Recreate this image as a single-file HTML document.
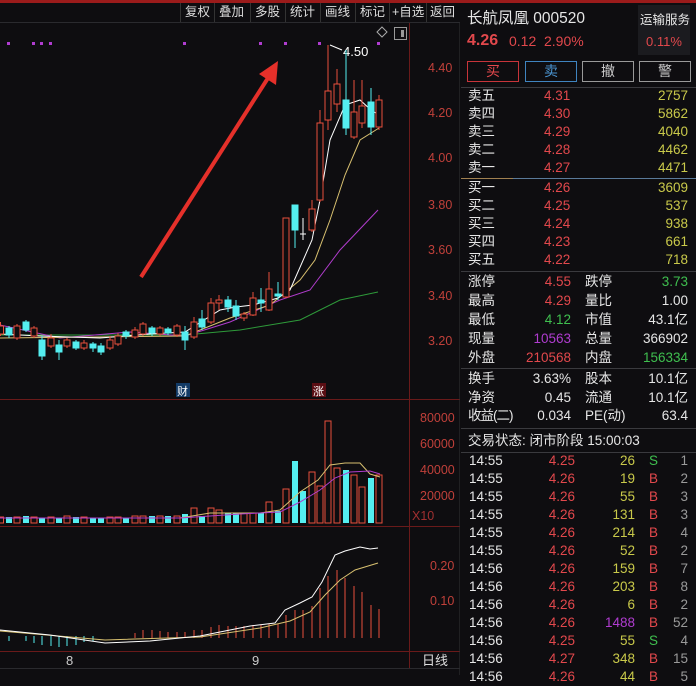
<!DOCTYPE html><html><head><meta charset="utf-8"><style>
*{margin:0;padding:0;box-sizing:border-box}
body{width:696px;height:675px;background:#0e0d10;overflow:hidden;position:relative;font-family:"Liberation Sans","Noto Sans CJK SC",sans-serif;color:#e6e6e6}
.a{position:absolute;white-space:nowrap}
.r{color:#e2484c}.y{color:#c9c94a}.g{color:#3fbf4f}.w{color:#e6e6e6}.p{color:#b03cd0}.gr{color:#9a9a9a}
.tb{position:absolute;top:3px;height:19px;font-size:12.5px;color:#ddd;border-left:1px solid #333;padding-left:4px;line-height:19px}
.row{position:absolute;left:461px;width:235px;height:18px;font-size:13.5px;line-height:18px}
.row span{position:absolute}
.hl{position:absolute;left:461px;width:235px;height:1px;background:#3a3a3e}
</style></head><body>
<div class="a" style="left:0;top:0;width:696px;height:3px;background:#9b1b1b"></div>
<div class="tb" style="left:180px">复权</div><div class="tb" style="left:214px">叠加</div><div class="tb" style="left:250px">多股</div><div class="tb" style="left:285px">统计</div><div class="tb" style="left:320px">画线</div><div class="tb" style="left:355px">标记</div><div class="tb" style="left:389px;padding-left:2px">+自选</div><div class="tb" style="left:426px;padding-left:3px">返回</div>
<div class="a" style="left:0;top:22px;width:460px;height:1px;background:#2a2a2e"></div>
<svg class="a" style="left:0;top:0" width="460" height="675">
<g stroke="#6a1a1a" stroke-width="1"><line x1="409.5" y1="23" x2="409.5" y2="668"/><line x1="0" y1="399.5" x2="460" y2="399.5"/><line x1="0" y1="526.5" x2="460" y2="526.5"/><line x1="0" y1="651.5" x2="460" y2="651.5"/><line x1="460" y1="23" x2="460" y2="675" stroke="#333"/></g>
<g fill="#c0403a" font-size="12.5" font-family="Liberation Sans">
<text x="428" y="72">4.40</text><text x="428" y="117">4.20</text><text x="428" y="162">4.00</text><text x="428" y="209">3.80</text><text x="428" y="254">3.60</text><text x="428" y="300">3.40</text><text x="428" y="345">3.20</text>
<text x="420" y="422">80000</text><text x="420" y="448">60000</text><text x="420" y="474">40000</text><text x="420" y="500">20000</text><text x="412" y="520" fill="#a03030">X10</text>
<text x="430" y="570">0.20</text><text x="430" y="605">0.10</text></g>
<g fill="#b03cd0"><rect x="7" y="42" width="3" height="3"/><rect x="32" y="42" width="3" height="3"/><rect x="40" y="42" width="3" height="3"/><rect x="49" y="42" width="3" height="3"/><rect x="183" y="42" width="3" height="3"/><rect x="259" y="42" width="3" height="3"/><rect x="284" y="42" width="3" height="3"/><rect x="318" y="42" width="3" height="3"/><rect x="377" y="42" width="3" height="3"/></g>
<path d="M382 27l5 5-5 5-5-5z" fill="none" stroke="#aaa"/><rect x="394.5" y="27.5" width="12" height="12" fill="none" stroke="#999"/><rect x="401" y="30" width="3" height="7" fill="#999"/>
<path d="M330 45l12 5" stroke="#fff"/><text x="343" y="56" fill="#fff" font-size="13">4.50</text>
<line x1="141" y1="277" x2="268" y2="78" stroke="#e5302a" stroke-width="4"/><path d="M278 61l-2 24-17-11z" fill="#e5302a"/>
<polyline fill="none" stroke="#2e9a3a" points="0,335 185,335 240,330 300,320 340,300 378,292"/>
<polyline fill="none" stroke="#b03ccc" points="0,325 60,338 130,332 185,336 230,322 280,300 310,290 340,250 378,210"/>
<polyline fill="none" stroke="#d8c070" points="0,338 185,336 230,318 270,305 300,280 315,260 330,220 345,175 360,140 379,128"/>
<polyline fill="none" stroke="#fff" points="0,334 40,336 100,338 150,334 185,332 220,310 236,307 253,305 278,298 290,290 312,240 320,200 330,140 345,105 360,100 371,110 379,115"/>
<g stroke-width="1">
<g stroke="#e8503c" fill="#0e0d10">
<line x1="0.5" y1="322" x2="0.5" y2="336"/><rect x="-2.5" y="326" width="6" height="8"/>
<line x1="17" y1="324" x2="17" y2="340"/><rect x="14" y="326" width="6" height="12"/>
<line x1="34" y1="326" x2="34" y2="338"/><rect x="31" y="328" width="6" height="8"/>
<line x1="51" y1="334" x2="51" y2="348"/><rect x="48" y="338" width="6" height="8"/>
<line x1="67" y1="338" x2="67" y2="348"/><rect x="64" y="340" width="6" height="6"/>
<line x1="84" y1="340" x2="84" y2="350"/><rect x="81" y="343" width="6" height="5"/>
<line x1="110" y1="336" x2="110" y2="350"/><rect x="107" y="340" width="6" height="8"/>
<line x1="118" y1="333" x2="118" y2="346"/><rect x="115" y="336" width="6" height="8"/>
<line x1="135" y1="327" x2="135" y2="339"/><rect x="132" y="330" width="6" height="7"/>
<line x1="143" y1="322" x2="143" y2="336"/><rect x="140" y="324" width="6" height="10"/>
<line x1="160" y1="326" x2="160" y2="336"/><rect x="157" y="328" width="6" height="6"/>
<line x1="177" y1="324" x2="177" y2="337"/><rect x="174" y="326" width="6" height="9"/>
<line x1="194" y1="317" x2="194" y2="339"/><rect x="191" y="322" width="6" height="15"/>
<line x1="211" y1="298" x2="211" y2="324"/><rect x="208" y="303" width="6" height="19"/>
<line x1="219" y1="295" x2="219" y2="310"/><rect x="216" y="300" width="6" height="3"/>
<line x1="244" y1="312" x2="244" y2="321"/><rect x="241" y="314" width="6" height="4"/>
<line x1="253" y1="292" x2="253" y2="316"/><rect x="250" y="298" width="6" height="17"/>
<line x1="269" y1="272" x2="269" y2="311"/><rect x="266" y="289" width="6" height="21"/>
<line x1="286" y1="218" x2="286" y2="298"/><rect x="283" y="218" width="6" height="79"/>
<line x1="312" y1="200" x2="312" y2="232"/><rect x="309" y="209" width="6" height="21"/>
<line x1="320" y1="110" x2="320" y2="202"/><rect x="317" y="123" width="6" height="77"/>
<line x1="328" y1="45" x2="328" y2="130"/><rect x="325" y="91" width="6" height="29"/>
<line x1="337" y1="69" x2="337" y2="112"/><rect x="334" y="84" width="6" height="20"/>
<line x1="354" y1="80" x2="354" y2="139"/><rect x="351" y="112" width="6" height="25"/>
<line x1="362" y1="80" x2="362" y2="128"/><rect x="359" y="106" width="6" height="17"/>
<line x1="379" y1="95" x2="379" y2="130"/><rect x="376" y="100" width="6" height="27"/>
</g>
<g stroke="#54eef0" fill="#54eef0">
<line x1="9" y1="326" x2="9" y2="338"/><rect x="6" y="328" width="6" height="7"/>
<line x1="26" y1="320" x2="26" y2="332"/><rect x="23" y="322" width="6" height="8"/>
<line x1="42" y1="336" x2="42" y2="360"/><rect x="39" y="340" width="6" height="16"/>
<line x1="59" y1="340" x2="59" y2="360"/><rect x="56" y="345" width="6" height="7"/>
<line x1="76" y1="340" x2="76" y2="350"/><rect x="73" y="342" width="6" height="6"/>
<line x1="93" y1="342" x2="93" y2="352"/><rect x="90" y="344" width="6" height="4"/>
<line x1="101" y1="343" x2="101" y2="355"/><rect x="98" y="346" width="6" height="6"/>
<line x1="126" y1="330" x2="126" y2="339"/><rect x="123" y="332" width="6" height="4"/>
<line x1="152" y1="326" x2="152" y2="336"/><rect x="149" y="328" width="6" height="5"/>
<line x1="168" y1="327" x2="168" y2="335"/><rect x="165" y="329" width="6" height="4"/>
<line x1="185" y1="326" x2="185" y2="350"/><rect x="182" y="332" width="6" height="8"/>
<line x1="202" y1="310" x2="202" y2="330"/><rect x="199" y="319" width="6" height="8"/>
<line x1="228" y1="296" x2="228" y2="312"/><rect x="225" y="300" width="6" height="7"/>
<line x1="236" y1="300" x2="236" y2="320"/><rect x="233" y="306" width="6" height="10"/>
<line x1="261" y1="288" x2="261" y2="312"/><rect x="258" y="300" width="6" height="3"/>
<line x1="278" y1="282" x2="278" y2="300"/><rect x="275" y="294" width="6" height="2"/>
<line x1="295" y1="205" x2="295" y2="248"/><rect x="292" y="205" width="6" height="25"/>
<line x1="346" y1="50" x2="346" y2="135"/><rect x="343" y="100" width="6" height="28"/>
<line x1="371" y1="88" x2="371" y2="135"/><rect x="368" y="102" width="6" height="25"/>
</g>
<g stroke="#fff"><line x1="303" y1="218" x2="303" y2="240"/><line x1="300" y1="234" x2="306" y2="234"/></g>
</g>
<g font-size="11" font-family="Noto Sans CJK SC"><rect x="176" y="383" width="14" height="14" fill="#123a66"/><text x="177" y="395" fill="#fff">财</text><rect x="312" y="383" width="14" height="14" fill="#5a0e14"/><text x="313" y="395" fill="#fff">涨</text></g>
<g stroke="#e8503c" fill="#0e0d10">
<rect x="-2.5" y="517" width="6" height="6"/><rect x="14" y="517" width="6" height="6"/><rect x="31" y="517" width="6" height="6"/><rect x="48" y="517" width="6" height="6"/><rect x="64" y="516" width="6" height="7"/><rect x="81" y="517" width="6" height="6"/><rect x="107" y="517" width="6" height="6"/><rect x="115" y="517" width="6" height="6"/><rect x="132" y="516" width="6" height="7"/><rect x="140" y="516" width="6" height="7"/><rect x="157" y="516" width="6" height="7"/><rect x="174" y="516" width="6" height="7"/><rect x="191" y="508" width="6" height="15"/><rect x="208" y="508" width="6" height="15"/><rect x="216" y="510" width="6" height="13"/><rect x="241" y="513" width="6" height="10"/><rect x="250" y="513" width="6" height="10"/><rect x="266" y="502" width="6" height="21"/><rect x="283" y="489" width="6" height="34"/><rect x="309" y="472" width="6" height="51"/><rect x="317" y="486" width="6" height="37"/><rect x="325" y="421" width="6" height="102"/><rect x="334" y="468" width="6" height="55"/><rect x="351" y="475" width="6" height="48"/><rect x="359" y="487" width="6" height="36"/><rect x="376" y="475" width="6" height="48"/>
</g>
<g fill="#54eef0"><rect x="6" y="517" width="6" height="6"/><rect x="23" y="516" width="6" height="7"/><rect x="39" y="518" width="6" height="5"/><rect x="56" y="518" width="6" height="5"/><rect x="73" y="517" width="6" height="6"/><rect x="90" y="518" width="6" height="5"/><rect x="98" y="518" width="6" height="5"/><rect x="123" y="518" width="6" height="5"/><rect x="149" y="516" width="6" height="7"/><rect x="165" y="516" width="6" height="7"/><rect x="182" y="514" width="6" height="9"/><rect x="199" y="516" width="6" height="7"/><rect x="225" y="513" width="6" height="10"/><rect x="233" y="513" width="6" height="10"/><rect x="258" y="513" width="6" height="10"/><rect x="275" y="511" width="6" height="12"/><rect x="292" y="461" width="6" height="62"/><rect x="300" y="491" width="6" height="32"/><rect x="343" y="470" width="6" height="53"/><rect x="368" y="478" width="6" height="45"/></g>
<polyline fill="none" stroke="#d8c070" points="0,518 180,518 210,513 260,513 280,510 300,492 318,480 330,465 345,463 360,463 370,474 380,477"/>
<polyline fill="none" stroke="#b03ccc" points="0,518 180,518 240,514 280,512 300,502 320,490 335,478 350,472 370,471 380,474"/>
<g stroke="#54eef0"><line x1="9" y1="636" x2="9" y2="641"/><line x1="26" y1="636" x2="26" y2="641"/><line x1="34" y1="636" x2="34" y2="643"/><line x1="42" y1="636" x2="42" y2="645"/><line x1="51" y1="636" x2="51" y2="646"/><line x1="59" y1="636" x2="59" y2="647"/><line x1="67" y1="636" x2="67" y2="646"/><line x1="76" y1="636" x2="76" y2="645"/><line x1="84" y1="636" x2="84" y2="642"/><line x1="93" y1="636" x2="93" y2="641"/></g>
<g stroke="#e8503c"><line x1="135" y1="638" x2="135" y2="633"/><line x1="143" y1="638" x2="143" y2="630"/><line x1="152" y1="638" x2="152" y2="630"/><line x1="160" y1="638" x2="160" y2="631"/><line x1="168" y1="638" x2="168" y2="632"/><line x1="177" y1="638" x2="177" y2="632"/><line x1="185" y1="638" x2="185" y2="632"/><line x1="194" y1="638" x2="194" y2="630"/><line x1="202" y1="638" x2="202" y2="630"/><line x1="211" y1="638" x2="211" y2="627"/><line x1="219" y1="638" x2="219" y2="625"/><line x1="228" y1="638" x2="228" y2="626"/><line x1="236" y1="638" x2="236" y2="626"/><line x1="244" y1="638" x2="244" y2="626"/><line x1="253" y1="638" x2="253" y2="625"/><line x1="261" y1="638" x2="261" y2="625"/><line x1="269" y1="638" x2="269" y2="624"/><line x1="278" y1="638" x2="278" y2="624"/><line x1="286" y1="638" x2="286" y2="615"/><line x1="295" y1="638" x2="295" y2="610"/><line x1="303" y1="638" x2="303" y2="610"/><line x1="312" y1="638" x2="312" y2="606"/><line x1="320" y1="638" x2="320" y2="588"/><line x1="328" y1="638" x2="328" y2="576"/><line x1="337" y1="638" x2="337" y2="570"/><line x1="345" y1="638" x2="345" y2="578"/><line x1="354" y1="638" x2="354" y2="586"/><line x1="362" y1="638" x2="362" y2="592"/><line x1="371" y1="638" x2="371" y2="605"/><line x1="379" y1="638" x2="379" y2="609"/></g>
<polyline fill="none" stroke="#d8c070" points="0,631 105,640 200,637 260,628 290,621 310,612 325,595 340,580 355,570 378,563"/>
<polyline fill="none" stroke="#fff" points="0,630 50,635 105,643 150,641 200,636 220,632 250,626 275,623 285,610 300,603 312,597 322,582 335,555 345,551 360,547 370,549 378,548"/>
<g fill="#ccc" font-size="13" font-family="Liberation Sans"><text x="66" y="665">8</text><text x="252" y="665">9</text></g>
<text x="422" y="665" fill="#ddd" font-size="13" font-family="Noto Sans CJK SC">日线</text>
<line x1="0" y1="668.5" x2="460" y2="668.5" stroke="#2a2a2e"/>
</svg>
<div class="a w" style="left:467px;top:6px;font-size:15.5px">长航凤凰 000520</div>
<div class="a" style="left:638px;top:5px;width:52px;height:50px;background:#1b1b1f"></div>
<div class="a w" style="left:640px;top:9px;font-size:12.5px">运输服务</div>
<div class="a r" style="left:646px;top:34px;font-size:13px">0.11%</div>
<div class="a r" style="left:467px;top:32px;font-size:16px;font-weight:bold">4.26</div>
<div class="a r" style="left:509px;top:33px;font-size:14px">0.12</div>
<div class="a r" style="left:544px;top:33px;font-size:14px">2.90%</div>
<div class="a r" style="left:467px;top:61px;width:52px;height:21px;border:1px solid #c8343a;text-align:center;font-size:14px;line-height:19px">买</div>
<div class="a" style="left:525px;top:61px;width:52px;height:21px;border:1px solid #3f84c0;color:#4a94d0;text-align:center;font-size:14px;line-height:19px">卖</div>
<div class="a gr" style="left:582px;top:61px;width:52px;height:21px;border:1px solid #999;text-align:center;font-size:14px;line-height:19px;color:#ccc">撤</div>
<div class="a gr" style="left:639px;top:61px;width:52px;height:21px;border:1px solid #999;text-align:center;font-size:14px;line-height:19px;color:#ccc">警</div>
<div class="hl" style="top:87px"></div>
<div class="row" style="top:87px"><span style="left:7px">卖五</span><span class="r" style="left:83px">4.31</span><span class="y" style="right:8px">2757</span></div>
<div class="row" style="top:105px"><span style="left:7px">卖四</span><span class="r" style="left:83px">4.30</span><span class="y" style="right:8px">5862</span></div>
<div class="row" style="top:123px"><span style="left:7px">卖三</span><span class="r" style="left:83px">4.29</span><span class="y" style="right:8px">4040</span></div>
<div class="row" style="top:141px"><span style="left:7px">卖二</span><span class="r" style="left:83px">4.28</span><span class="y" style="right:8px">4462</span></div>
<div class="row" style="top:159px"><span style="left:7px">卖一</span><span class="r" style="left:83px">4.27</span><span class="y" style="right:8px">4471</span></div>
<div class="hl" style="top:178px;background:#5a7a9a"></div><div class="a" style="left:461px;top:178px;width:52px;height:1px;background:#a08050"></div>
<div class="row" style="top:179px"><span style="left:7px">买一</span><span class="r" style="left:83px">4.26</span><span class="y" style="right:8px">3609</span></div>
<div class="row" style="top:197px"><span style="left:7px">买二</span><span class="r" style="left:83px">4.25</span><span class="y" style="right:8px">537</span></div>
<div class="row" style="top:215px"><span style="left:7px">买三</span><span class="r" style="left:83px">4.24</span><span class="y" style="right:8px">938</span></div>
<div class="row" style="top:233px"><span style="left:7px">买四</span><span class="r" style="left:83px">4.23</span><span class="y" style="right:8px">661</span></div>
<div class="row" style="top:251px"><span style="left:7px">买五</span><span class="r" style="left:83px">4.22</span><span class="y" style="right:8px">718</span></div>
<div class="hl" style="top:271px"></div>
<div class="row" style="top:273px"><span style="left:7px">涨停</span><span class="r" style="right:125px">4.55</span><span style="left:124px">跌停</span><span class="g" style="right:8px">3.73</span></div>
<div class="row" style="top:292px"><span style="left:7px">最高</span><span class="r" style="right:125px">4.29</span><span style="left:124px">量比</span><span style="right:8px">1.00</span></div>
<div class="row" style="top:311px"><span style="left:7px">最低</span><span class="g" style="right:125px">4.12</span><span style="left:124px">市值</span><span style="right:8px">43.1亿</span></div>
<div class="row" style="top:330px"><span style="left:7px">现量</span><span class="p" style="right:125px">10563</span><span style="left:124px">总量</span><span style="right:8px">366902</span></div>
<div class="row" style="top:349px"><span style="left:7px">外盘</span><span class="r" style="right:125px">210568</span><span style="left:124px">内盘</span><span class="g" style="right:8px">156334</span></div>
<div class="hl" style="top:368px"></div>
<div class="row" style="top:370px"><span style="left:7px">换手</span><span style="right:125px">3.63%</span><span style="left:124px">股本</span><span style="right:8px">10.1亿</span></div>
<div class="row" style="top:389px"><span style="left:7px">净资</span><span style="right:125px">0.45</span><span style="left:124px">流通</span><span style="right:8px">10.1亿</span></div>
<div class="row" style="top:407px"><span style="left:7px;letter-spacing:-1px">收益(二)</span><span style="right:125px">0.034</span><span style="left:124px">PE(动)</span><span style="right:8px">63.4</span></div>
<div class="hl" style="top:428px"></div>
<div class="row" style="top:432px"><span style="left:7px">交易状态: 闭市阶段 15:00:03</span></div>
<div class="hl" style="top:452px"></div>
<div class="row" style="top:452px"><span style="left:8px">14:55</span><span class="r" style="right:121px">4.25</span><span class="y" style="right:61px">26</span><span class="g" style="left:188px">S</span><span class="gr" style="right:8px">1</span></div>
<div class="row" style="top:470px"><span style="left:8px">14:55</span><span class="r" style="right:121px">4.26</span><span class="y" style="right:61px">19</span><span class="r" style="left:188px">B</span><span class="gr" style="right:8px">2</span></div>
<div class="row" style="top:488px"><span style="left:8px">14:55</span><span class="r" style="right:121px">4.26</span><span class="y" style="right:61px">55</span><span class="r" style="left:188px">B</span><span class="gr" style="right:8px">3</span></div>
<div class="row" style="top:506px"><span style="left:8px">14:55</span><span class="r" style="right:121px">4.26</span><span class="y" style="right:61px">131</span><span class="r" style="left:188px">B</span><span class="gr" style="right:8px">3</span></div>
<div class="row" style="top:524px"><span style="left:8px">14:55</span><span class="r" style="right:121px">4.26</span><span class="y" style="right:61px">214</span><span class="r" style="left:188px">B</span><span class="gr" style="right:8px">4</span></div>
<div class="row" style="top:542px"><span style="left:8px">14:55</span><span class="r" style="right:121px">4.26</span><span class="y" style="right:61px">52</span><span class="r" style="left:188px">B</span><span class="gr" style="right:8px">2</span></div>
<div class="row" style="top:560px"><span style="left:8px">14:56</span><span class="r" style="right:121px">4.26</span><span class="y" style="right:61px">159</span><span class="r" style="left:188px">B</span><span class="gr" style="right:8px">7</span></div>
<div class="row" style="top:578px"><span style="left:8px">14:56</span><span class="r" style="right:121px">4.26</span><span class="y" style="right:61px">203</span><span class="r" style="left:188px">B</span><span class="gr" style="right:8px">8</span></div>
<div class="row" style="top:596px"><span style="left:8px">14:56</span><span class="r" style="right:121px">4.26</span><span class="y" style="right:61px">6</span><span class="r" style="left:188px">B</span><span class="gr" style="right:8px">2</span></div>
<div class="row" style="top:614px"><span style="left:8px">14:56</span><span class="r" style="right:121px">4.26</span><span class="p" style="right:61px">1488</span><span class="r" style="left:188px">B</span><span class="gr" style="right:8px">52</span></div>
<div class="row" style="top:632px"><span style="left:8px">14:56</span><span class="r" style="right:121px">4.25</span><span class="y" style="right:61px">55</span><span class="g" style="left:188px">S</span><span class="gr" style="right:8px">4</span></div>
<div class="row" style="top:650px"><span style="left:8px">14:56</span><span class="r" style="right:121px">4.27</span><span class="y" style="right:61px">348</span><span class="r" style="left:188px">B</span><span class="gr" style="right:8px">15</span></div>
<div class="row" style="top:668px"><span style="left:8px">14:56</span><span class="r" style="right:121px">4.26</span><span class="y" style="right:61px">44</span><span class="r" style="left:188px">B</span><span class="gr" style="right:8px">5</span></div>
</body></html>
